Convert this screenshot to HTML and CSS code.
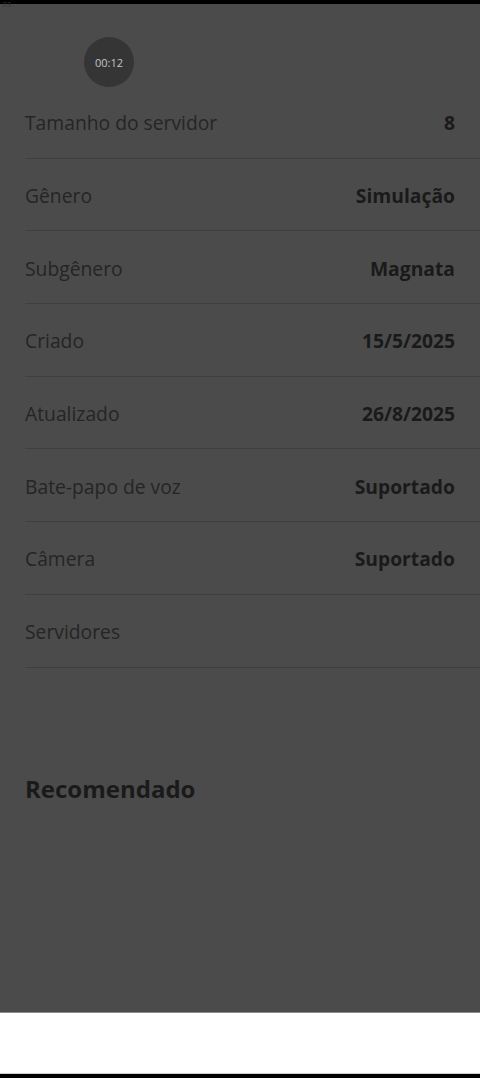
FILE: index.html
```html
<!DOCTYPE html>
<html lang="pt">

<head>
    <meta charset="UTF-8">
    <meta name="viewport" content="width=device-width, initial-scale=1.0">
    <title>Detalhes</title>
    <link rel="stylesheet" href="styles.css">
</head>

<body>

    <div class="screen">
        <div class="top-bar"><span>33</span></div>

        <div class="header">
            <div class="timer">00:12</div>
        </div>

        <!-- Informações do jogo -->
        <div class="info-list">
            <div class="info-row"><span class="label">Tamanho do servidor</span><span class="value">8</span></div>
            <div class="info-row"><span class="label">Gênero</span><span class="value">Simulação</span></div>
            <div class="info-row"><span class="label">Subgênero</span><span class="value">Magnata</span></div>
            <div class="info-row"><span class="label">Criado</span><span class="value">15/5/2025</span></div>
            <div class="info-row"><span class="label">Atualizado</span><span class="value">26/8/2025</span></div>
            <div class="info-row"><span class="label">Bate-papo de voz</span><span class="value">Suportado</span></div>
            <div class="info-row"><span class="label">Câmera</span><span class="value">Suportado</span></div>
            <div class="info-row"><span class="label">Servidores</span></div>
        </div>

        <h2 class="section-title">Recomendado</h2>
    </div>

    <div class="bottom-sheet"></div>
    <div class="nav-bar"></div>

</body>

</html>
```

FILE: styles.css
```css
* {
    margin: 0;
    padding: 0;
    box-sizing: border-box;
}

body {
    font-family: "Open Sans", "Noto Sans", sans-serif;
    background-color: #4b4b4b;
    color: #1f1f1f;
    width: 480px;
    height: 1078px;
    overflow: hidden;
}

.screen {
    height: 1013px;
    background-color: #4b4b4b;
    border-bottom: 1px solid #8a8a8a;
}

.top-bar {
    height: 4px;
    background-color: #000;
    position: relative;
}

.top-bar span {
    position: absolute;
    left: 2px;
    top: 0;
    font-size: 8px;
    line-height: 8px;
    color: #3a3a3a;
}

.header {
    height: 82px;
    padding-left: 84px;
    padding-top: 33px;
}

.timer {
    width: 50px;
    height: 50px;
    border-radius: 50%;
    background-color: #353535;
    color: #c4c4c4;
    font-size: 11px;
    display: flex;
    align-items: center;
    justify-content: center;
}

.info-list {
    margin-left: 25px;
}

.info-row {
    height: 72.7px;
    display: flex;
    align-items: center;
    justify-content: space-between;
    padding-top: 2px;
    padding-right: 25px;
    border-bottom: 1px solid #3f3f3f;
    font-size: 19.3px;
}

.label {
    color: #252525;
}

.value {
    font-weight: 700;
    color: #1a1a1a;
}

.section-title {
    margin: 104px 0 0 25px;
    font-size: 24px;
    font-weight: 700;
    color: #1a1a1a;
}

.bottom-sheet {
    height: 61px;
    background-color: #ffffff;
    border-bottom: 1px solid #cfcfcf;
}

.nav-bar {
    height: 4px;
    background-color: #000;
}
```
